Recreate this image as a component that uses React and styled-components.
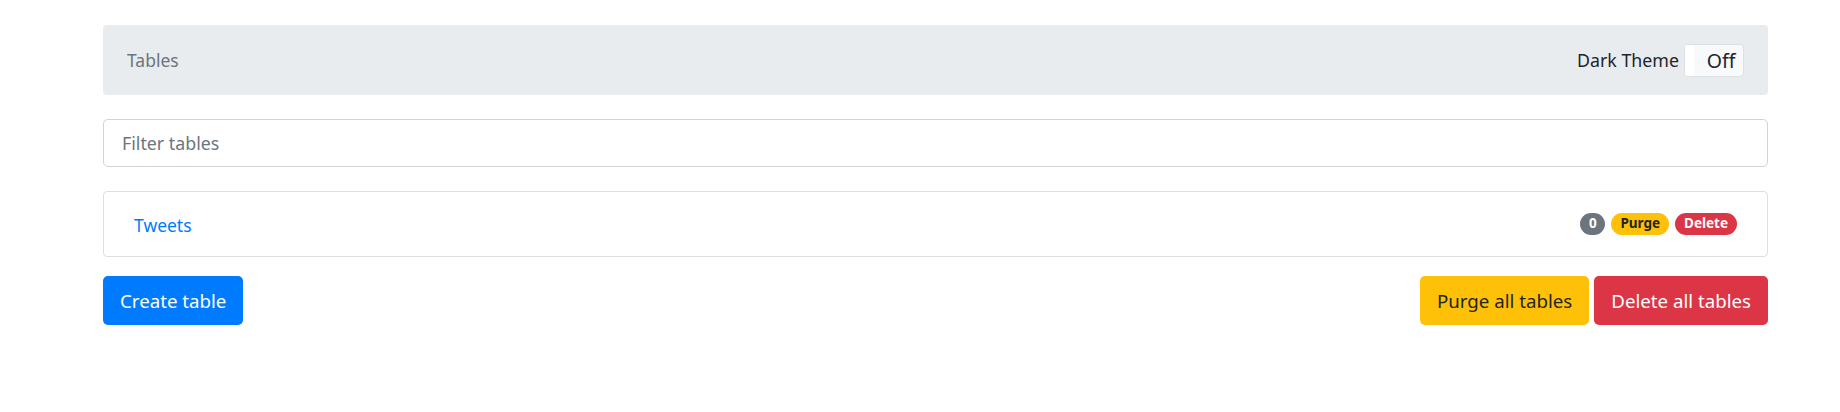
import React from "react";
import styled, { createGlobalStyle } from "styled-components";

const Global = createGlobalStyle`
  html, body { margin: 0; padding: 0; background: #fff; }
  body {
    font-family: "Noto Sans", "Open Sans", Arial, sans-serif;
    color: #212529;
    font-size: 16px;
  }
  * { box-sizing: border-box; }
`;

const Page = styled.div`
  padding: 25px 72px 0 103px;
  display: flex;
  flex-direction: column;
`;

const Crumb = styled.nav`
  height: 70px;
  background: #e9ecef;
  border-radius: 4px;
  padding: 0 24px 0 24px;
  display: flex;
  align-items: center;
  justify-content: space-between;
`;

const CrumbTitle = styled.span`
  font-size: 17.5px;
  color: #6c757d;
`;

const ThemeBox = styled.div`
  display: flex;
  align-items: center;
  gap: 5px;
  font-size: 17.8px;
`;

const Toggle = styled.button`
  position: relative;
  width: 60px;
  height: 33px;
  border: 1px solid #dde0e3;
  border-radius: 4px;
  background: #f8f9fa;
  color: #212529;
  font-family: inherit;
  font-size: 19.5px;
  padding: 0 0 0 14px;
  display: flex;
  align-items: center;
  justify-content: center;
  overflow: hidden;
  &::before {
    content: "";
    position: absolute;
    left: 0;
    top: 0;
    bottom: 0;
    width: 9px;
    background: #fff;
  }
`;

const Filter = styled.input`
  margin-top: 24px;
  height: 48px;
  border: 1px solid #ced4da;
  border-radius: 5px;
  padding: 0 18px;
  font-family: inherit;
  font-size: 17.8px;
  color: #495057;
  outline: none;
  &::placeholder { color: #6c757d; }
`;

const TableCard = styled.div`
  margin-top: 24px;
  height: 66px;
  border: 1px solid rgba(0, 0, 0, 0.125);
  border-radius: 4px;
  padding: 0 30px;
  display: flex;
  align-items: center;
  justify-content: space-between;
`;

const TableLink = styled.a`
  color: #007bff;
  font-size: 17.5px;
  text-decoration: none;
  padding-top: 2px;
`;

const Badges = styled.div`
  display: flex;
  gap: 6px;
  align-items: center;
`;

const Badge = styled.span`
  display: inline-flex;
  align-items: center;
  justify-content: center;
  height: 22px;
  min-width: 25px;
  padding: 0 ${(p) => (p.$round ? 0 : 9)}px;
  border-radius: 11px;
  font-size: 13.5px;
  font-weight: 700;
  line-height: 1;
  background: ${(p) => p.$bg};
  color: ${(p) => p.$fg};
`;

const Actions = styled.div`
  margin-top: 19px;
  display: flex;
  justify-content: space-between;
`;

const Group = styled.div`
  display: flex;
  gap: 5px;
`;

const Btn = styled.button`
  height: 49px;
  padding: 0 17px;
  border: none;
  border-radius: 5px;
  font-family: inherit;
  font-size: 18.7px;
  background: ${(p) => p.$bg};
  color: ${(p) => p.$fg};
  cursor: pointer;
`;

export default function App() {
  return (
    <>
      <Global />
      <Page>
        <Crumb>
          <CrumbTitle>Tables</CrumbTitle>
          <ThemeBox>
            Dark Theme
            <Toggle>Off</Toggle>
          </ThemeBox>
        </Crumb>
        <Filter placeholder="Filter tables" />
        <TableCard>
          <TableLink href="#">Tweets</TableLink>
          <Badges>
            <Badge $round $bg="#6c757d" $fg="#fff">0</Badge>
            <Badge $bg="#ffc107" $fg="#212529">Purge</Badge>
            <Badge $bg="#dc3545" $fg="#fff">Delete</Badge>
          </Badges>
        </TableCard>
        <Actions>
          <Btn $bg="#007bff" $fg="#fff">Create table</Btn>
          <Group>
            <Btn $bg="#ffc107" $fg="#212529">Purge all tables</Btn>
            <Btn $bg="#dc3545" $fg="#fff">Delete all tables</Btn>
          </Group>
        </Actions>
      </Page>
    </>
  );
}
